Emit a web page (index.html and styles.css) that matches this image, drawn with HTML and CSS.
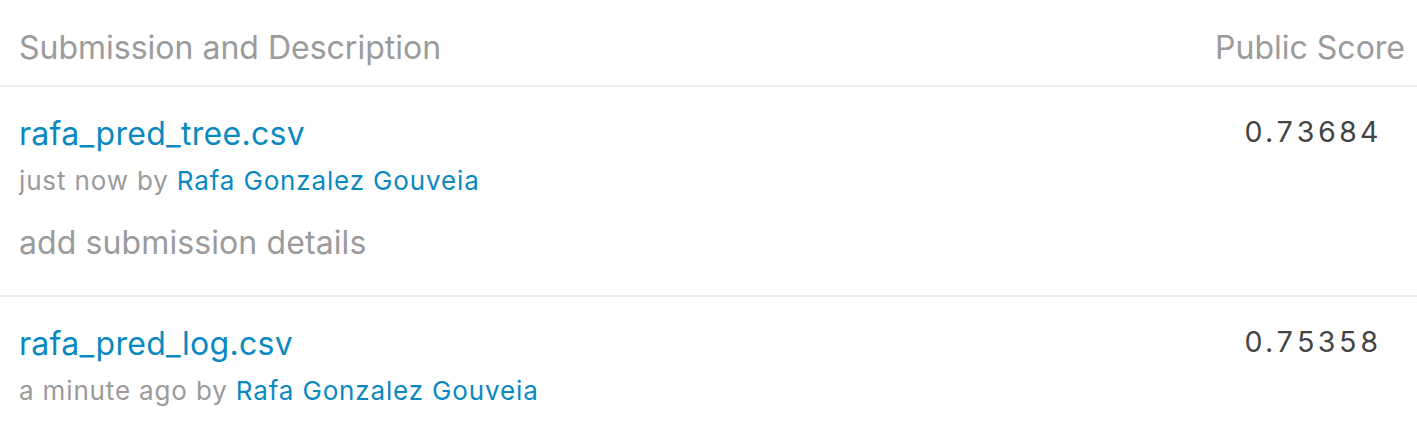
FILE: index.html
```html
<!DOCTYPE html>
<html>
<head>
<meta charset="utf-8">
<link rel="stylesheet" href="styles.css">
</head>
<body>
<div class="table">
  <div class="head">
    <div class="col-desc">Submission and Description</div>
    <div class="col-score">Public Score</div>
  </div>
  <div class="row">
    <div class="desc">
      <a class="title">rafa_pred_tree.csv</a>
      <div class="meta">just now by <a class="user">Rafa Gonzalez Gouveia</a></div>
      <div class="details">add submission details</div>
    </div>
    <div class="score">0.73684</div>
  </div>
  <div class="row">
    <div class="desc">
      <a class="title">rafa_pred_log.csv</a>
      <div class="meta">a minute ago by <a class="user">Rafa Gonzalez Gouveia</a></div>
    </div>
    <div class="score">0.75358</div>
  </div>
</div>
</body>
</html>
```
FILE: styles.css
```css
html, body {
  margin: 0;
  padding: 0;
  background: #ffffff;
}
body {
  font-family: Inter, "Noto Sans", sans-serif;
}
.table {
  display: flex;
  flex-direction: column;
}
.head {
  display: flex;
  justify-content: space-between;
  align-items: flex-start;
  box-sizing: border-box;
  height: 87px;
  padding: 28px 12px 0 19px;
  border-bottom: 2px solid #ebebeb;
  color: #9b9b9b;
  font-size: 32px;
  line-height: 40px;
}
.row {
  display: flex;
  justify-content: space-between;
  align-items: flex-start;
  padding: 27px 36px 32px 19px;
  border-bottom: 2px solid #ebebeb;
}
.desc {
  display: flex;
  flex-direction: column;
}
.title {
  color: #0a89c1;
  font-size: 32px;
  line-height: 40px;
  letter-spacing: 0.3px;
}
.meta {
  color: #9b9b9b;
  font-size: 26px;
  line-height: 34px;
  letter-spacing: 0.85px;
  margin-top: 10px;
}
.user {
  color: #0a89c1;
}
.details {
  color: #9b9b9b;
  font-size: 32px;
  line-height: 40px;
  letter-spacing: 0.1px;
  margin-top: 25px;
}
.score {
  color: #444444;
  font-size: 28.5px;
  line-height: 40px;
  font-variant-numeric: tabular-nums;
  letter-spacing: 2.6px;
  margin-top: -2px;
}
```
